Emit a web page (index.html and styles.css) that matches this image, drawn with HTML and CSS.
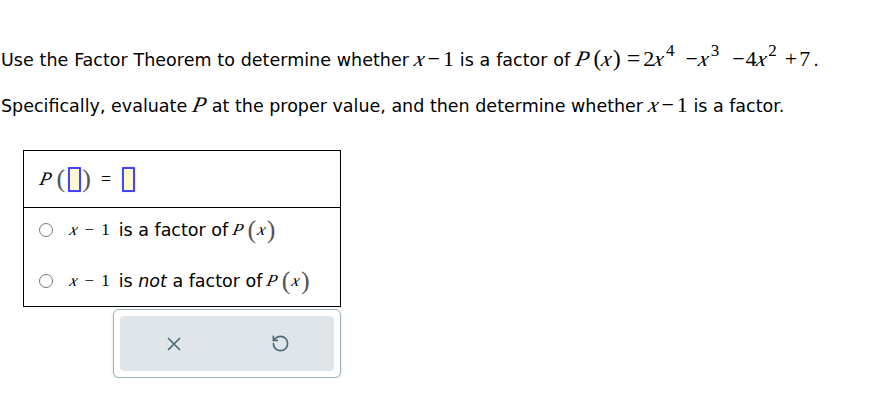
FILE: index.html
```html
<!DOCTYPE html>
<html>
<head>
<meta charset="utf-8">
<link rel="stylesheet" href="styles.css">
</head>
<body>
<div class="page">
  <p class="line l1">Use the Factor Theorem to determine whether <span class="m"><span class="v">x</span><span class="op">−</span>1</span> is a factor of <span class="m"><span class="v">P</span><span class="par lpar">(</span><span class="v">x</span><span class="par">)</span><span class="eq">=</span>2<span class="v">x</span><span class="sup">4</span><span class="op2">−</span><span class="v">x</span><span class="sup">3</span><span class="op2 wide">−</span>4<span class="v">x</span><span class="sup">2</span><span class="op2 narrow">+</span>7</span><span class="dot">.</span></p>
  <p class="line l2">Specifically, evaluate <span class="m"><span class="v">P</span></span> at the proper value, and then determine whether <span class="m"><span class="v">x</span><span class="op">−</span>1</span> is a factor.</p>

  <div class="box">
    <div class="row-eval">
      <span class="sm"><span class="v">P</span></span>
      <span class="bigpar lp">(</span><span class="inp"></span><span class="bigpar rp">)</span>
      <span class="sm eqs">=</span>
      <span class="inp"></span>
    </div>
    <div class="choices">
      <label class="choice"><span class="radio"></span><span class="sm"><span class="v">x</span><span class="mm">−</span>1</span><span class="txt">is a factor of</span><span class="sm"><span class="v">P</span></span><span class="bigpar2 lp2">(</span><span class="sm"><span class="v">x</span></span><span class="bigpar2 rp2">)</span></label>
      <label class="choice"><span class="radio"></span><span class="sm"><span class="v">x</span><span class="mm">−</span>1</span><span class="txt">is <em>not</em> a factor of</span><span class="sm"><span class="v">P</span></span><span class="bigpar2 lp2">(</span><span class="sm"><span class="v">x</span></span><span class="bigpar2 rp2">)</span></label>
    </div>
  </div>

  <div class="tools">
    <div class="tools-inner">
      <button class="tbtn" aria-label="clear">
        <svg width="16" height="16" viewBox="0 0 16 16"><path d="M2.5 2.5 L13.5 13.5 M13.5 2.5 L2.5 13.5" stroke="#4a6b78" stroke-width="1.7" fill="none" stroke-linecap="round"/></svg>
      </button>
      <button class="tbtn" aria-label="undo">
        <svg width="19" height="19" viewBox="0 0 24 24" fill="none" stroke="#4a6b78" stroke-width="2.1" stroke-linecap="round" stroke-linejoin="round"><path d="M3 12a9 9 0 1 0 9-9 9.75 9.75 0 0 0-6.74 2.74L3 8"/><path d="M3 3v5h5"/></svg>
      </button>
    </div>
  </div>
</div>
</body>
</html>
```
FILE: styles.css
```css
html, body { margin: 0; padding: 0; background: #fff; }
body { font-family: "DejaVu Sans", Verdana, sans-serif; font-size: 17.5px; color: #000; }
.page { padding: 0 0 0 1px; }
.line { margin: 0; white-space: nowrap; }
.l1 { padding-top: 44px; height: 28px; line-height: 28px; word-spacing: 0.3px; }
.l2 { margin-top: 19px; height: 28px; line-height: 28px; }
.m { font-family: "Liberation Serif", "Times New Roman", serif; font-size: 22px; word-spacing: 0; }
.v { font-family: "Liberation Serif", "DejaVu Serif", serif; font-style: italic; font-synthesis: style; display: inline-block; transform: skewX(-12deg); }
.m .op { margin: 0 3px; }
.m .eq { font-size: 24px; margin: 0 3px 0 5px; }
.m .par { font-size: 23px; margin: 0 1px; }
.m .lpar { margin-left: 4px; }
.m .sup { font-family: "Liberation Serif", "Times New Roman", serif; font-size: 17px; display: inline-block; line-height: 1; position: relative; top: -10px; margin-left: 2px; }
.m .op2 { margin: 0 1px 0 11px; }
.m .op2.wide { margin-left: 13px; }
.m .op2.narrow { margin-left: 8px; margin-right: 2px; }
.dot { margin-left: 3px; }

.box { margin: 31px 0 0 22px; width: 316px; border: 1px solid #000; }
.row-eval { height: 56px; border-bottom: 1px solid #000; display: flex; align-items: center; padding-left: 16px; }
.sm { font-family: "Liberation Serif", "Times New Roman", serif; font-size: 17px; }
.row-eval .sm .v, .choice .sm + .sm .v { font-size: 19px; }
.bigpar { font-family: "Liberation Serif", serif; font-size: 26px; color: #555; line-height: 1; }
.lp { margin: 0 3px 0 5px; }
.rp { margin: 0 0 0 1px; }
.eqs { margin: 0 11px 0 10px; font-size: 18px; }
.inp { display: inline-block; width: 9px; height: 21px; background: #fff9d2; border: 2px solid #4444ff; border-radius: 1px; box-shadow: 0 0 1px #8888ff; }
.choices { padding: 9px 0 12px 15px; display: flex; flex-direction: column; gap: 25px; }
.choice { display: flex; align-items: center; height: 26px; white-space: nowrap; }
.radio { width: 12px; height: 12px; border: 1px solid #777; border-radius: 50%; margin-right: 17px; }
.mm { margin: 0 7px; }
.txt { margin: 0 5px 0 9px; }
.bigpar2 { font-family: "Liberation Serif", serif; font-size: 26px; color: #555; }
.lp2 { margin: 0 2px 0 4px; }
.rp2 { margin: 0 0 0 1px; }
.choice em { font-style: italic; }

.tools { margin: 2px 0 0 112px; width: 214px; height: 55px; padding: 6px 6px; border: 1px solid #9fb3bd; border-radius: 6px; background: #fff; box-shadow: 0 1px 3px rgba(0,0,0,0.15); }
.tools-inner { height: 100%; background: #dfe5e8; border-radius: 4px; display: flex; justify-content: space-around; align-items: center; }
.tbtn { background: none; border: 0; padding: 0; width: 30px; height: 30px; display: flex; align-items: center; justify-content: center; }
```
